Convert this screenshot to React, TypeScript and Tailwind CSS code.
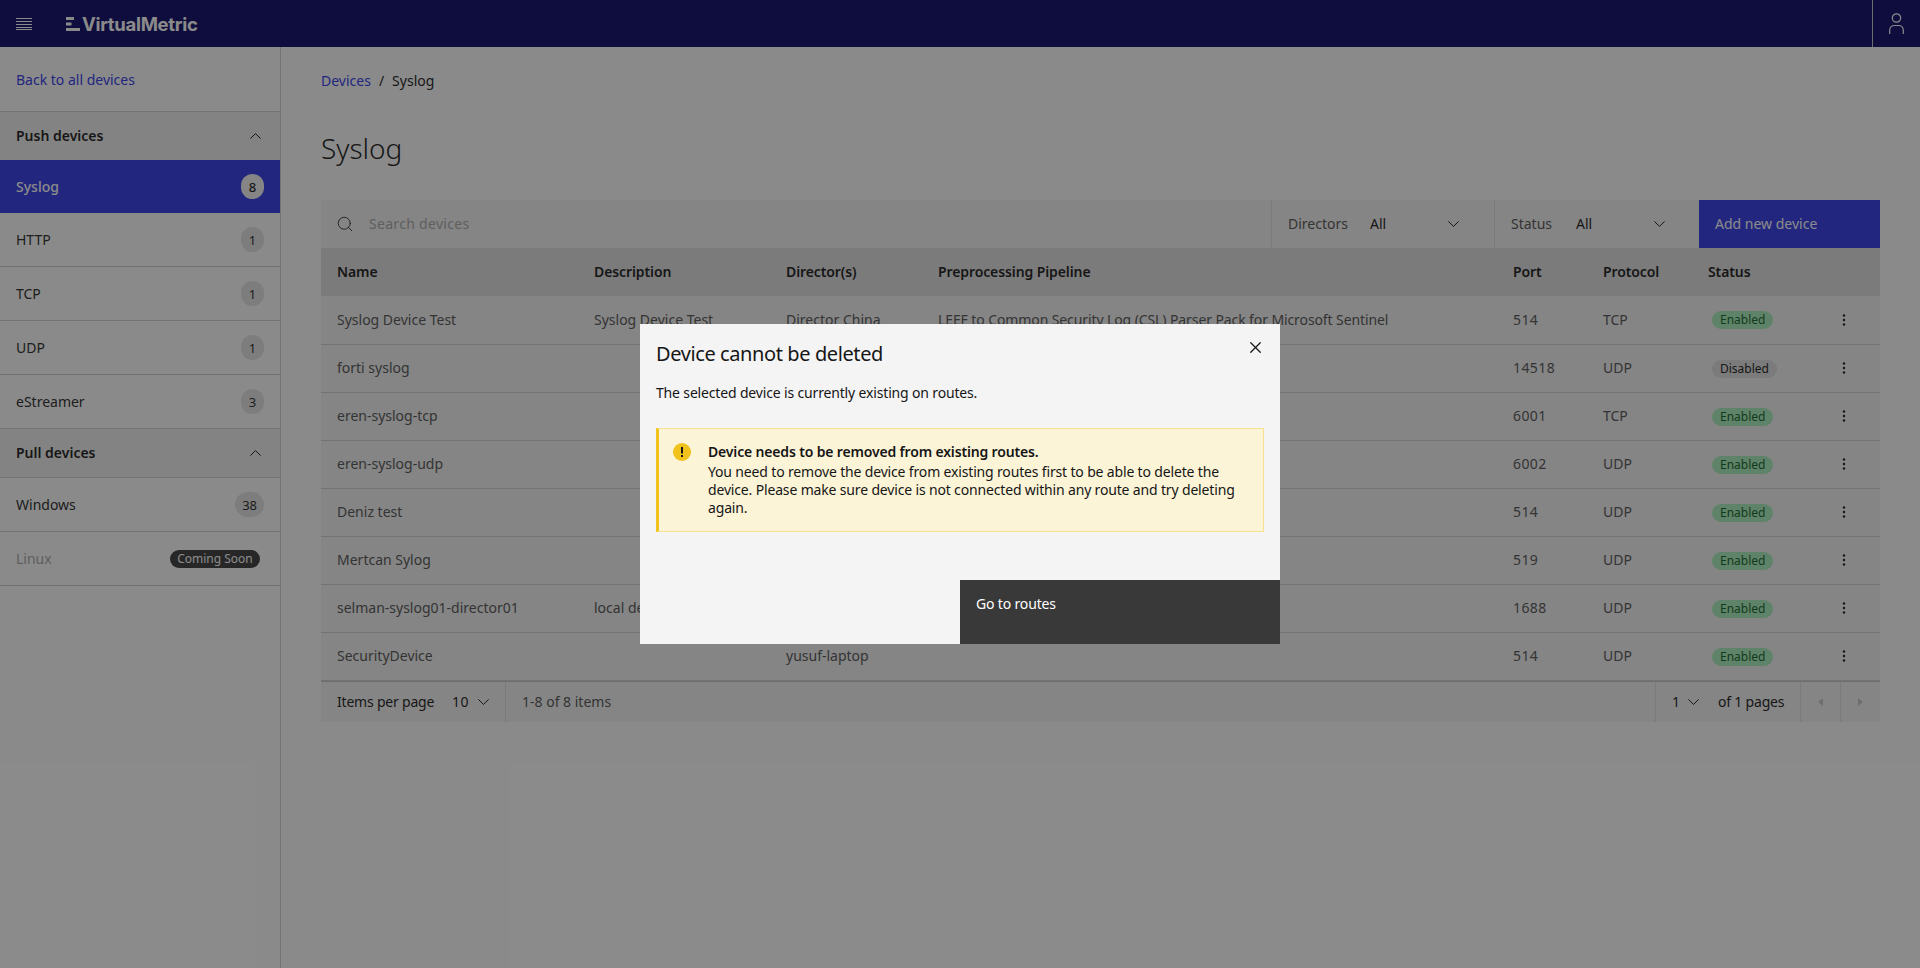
import { Search, X } from 'lucide-react';

type Device = {
  name: string;
  description?: string;
  director?: string;
  pipeline?: string;
  port: number;
  protocol: string;
  enabled: boolean;
};

const DEVICES: Device[] = [
  {
    name: 'Syslog Device Test',
    description: 'Syslog Device Test',
    director: 'Director China',
    pipeline: 'LEEF to Common Security Log (CSL) Parser Pack for Microsoft Sentinel',
    port: 514,
    protocol: 'TCP',
    enabled: true,
  },
  { name: 'forti syslog', port: 14518, protocol: 'UDP', enabled: false },
  { name: 'eren-syslog-tcp', port: 6001, protocol: 'TCP', enabled: true },
  { name: 'eren-syslog-udp', port: 6002, protocol: 'UDP', enabled: true },
  { name: 'Deniz test', port: 514, protocol: 'UDP', enabled: true },
  { name: 'Mertcan Sylog', port: 519, protocol: 'UDP', enabled: true },
  { name: 'selman-syslog01-director01', description: 'local device', port: 1688, protocol: 'UDP', enabled: true },
  { name: 'SecurityDevice', director: 'yusuf-laptop', port: 514, protocol: 'UDP', enabled: true },
];

const PUSH_ITEMS = [
  { label: 'Syslog', count: 8, active: true },
  { label: 'HTTP', count: 1 },
  { label: 'TCP', count: 1 },
  { label: 'UDP', count: 1 },
  { label: 'eStreamer', count: 3 },
];

function Chevron({ up }: { up?: boolean }) {
  return (
    <svg width="11" height="6" viewBox="0 0 11 6" fill="none" stroke="#161616" strokeWidth="1" className="shrink-0">
      <path d={up ? 'M.4 5.6l5.1-5 5.1 5' : 'M.4.4l5.1 5 5.1-5'} />
    </svg>
  );
}

function MenuIcon() {
  return (
    <svg width="16" height="12" viewBox="0 0 16 12" fill="none" stroke="#fff" strokeWidth="1">
      <path d="M0 .5h16M0 3.5h16M0 6.5h16M0 9.5h16M0 11.5h16" />
    </svg>
  );
}

function Logo() {
  return (
    <div className="flex items-center gap-[2px]">
      <svg width="14" height="14" viewBox="0 0 14 14" fill="#fff">
        <rect x="0" y="0" width="8" height="3" />
        <rect x="0" y="5.5" width="5.5" height="3" />
        <rect x="0" y="11" width="14" height="3" />
      </svg>
      <span className="text-[18.5px] leading-5 font-bold tracking-[-0.3px] text-white font-['Inter',sans-serif]">
        VirtualMetric
      </span>
    </div>
  );
}

function UserIcon() {
  return (
    <svg width="15" height="21" viewBox="0 0 15 21" fill="none" stroke="#fff" strokeWidth="1.2">
      <circle cx="7.5" cy="5" r="4.2" />
      <path d="M.7 21v-3.5c0-3 2-5 5-5h3.6c3 0 5 2 5 5V21" />
    </svg>
  );
}

function Kebab() {
  return (
    <svg width="4" height="12" viewBox="0 0 4 12" fill="#161616">
      <circle cx="2" cy="1.5" r="1.2" />
      <circle cx="2" cy="6" r="1.2" />
      <circle cx="2" cy="10.5" r="1.2" />
    </svg>
  );
}

function SideRow({ label, count, active }: { label: string; count: number; active?: boolean }) {
  return (
    <div
      className={
        active
          ? 'h-[53px] flex items-center justify-between pl-4 pr-4 bg-[#2e36e8] text-white font-medium'
          : 'h-[54px] flex items-center justify-between pl-4 pr-4 border-b border-[#d1d1d1] text-[#262626]'
      }
    >
      <span>{label}</span>
      <span
        className={
          active
            ? 'min-w-[23px] h-[25px] px-[7px] rounded-full flex items-center justify-center text-[13px] bg-[#f4f4f4] text-[#161616]'
            : 'min-w-[23px] h-[25px] px-[7px] rounded-full flex items-center justify-center text-[13px] bg-[#e4e4e4] text-[#262626]'
        }
      >
        {count}
      </span>
    </div>
  );
}

function SideHeader({ label, tall }: { label: string; tall?: boolean }) {
  return (
    <div
      className={
        tall
          ? 'h-[49px] flex items-center justify-between pl-4 pr-[19px] bg-[#f1f1f1] border-b border-[#d1d1d1] font-semibold text-[#161616]'
          : 'h-[48px] flex items-center justify-between pl-4 pr-[19px] bg-[#f1f1f1] font-semibold text-[#161616]'
      }
    >
      <span>{label}</span>
      <Chevron up />
    </div>
  );
}

function Sidebar() {
  return (
    <aside className="w-[281px] shrink-0 border-r border-[#d1d1d1] text-sm leading-[18px]">
      <div className="h-[65px] flex items-center pl-4 pt-[1px] border-b border-[#d1d1d1] text-[#2e36e8]">
        Back to all devices
      </div>
      <SideHeader label="Push devices" />
      {PUSH_ITEMS.map((item) => (
        <SideRow key={item.label} {...item} />
      ))}
      <SideHeader label="Pull devices" tall />
      <SideRow label="Windows" count={38} />
      <div className="h-[54px] flex items-center justify-between pl-4 pr-[20px] border-b border-[#d1d1d1]">
        <span className="text-[#a8a8a8]">Linux</span>
        <span className="h-[18px] w-[90px] rounded-full bg-[#393939] text-white text-xs leading-[18px] text-center">
          Coming Soon
        </span>
      </div>
    </aside>
  );
}

function Toolbar() {
  return (
    <div className="h-12 flex items-stretch bg-[#f4f4f4]">
      <div className="flex-1 flex items-center pl-[15px] gap-[15px] text-[#a8a8a8]">
        <Search size={18} strokeWidth={1.1} className="text-[#161616]" />
        <span className="tracking-[0.3px]">Search devices</span>
      </div>
      <div className="w-[223px] flex items-center pl-4 border-l border-[#e0e0e0]">
        <span className="w-[82px] text-[#525252]">Directors</span>
        <span className="w-[78px] text-[#161616]">All</span>
        <Chevron />
      </div>
      <div className="w-[205px] flex items-center pl-4 border-l border-[#e0e0e0]">
        <span className="w-[65px] text-[#525252]">Status</span>
        <span className="w-[78px] text-[#161616]">All</span>
        <Chevron />
      </div>
      <div className="w-[181px] flex items-center pl-4 bg-[#2e36e8] text-white">Add new device</div>
    </div>
  );
}

function DeviceTable() {
  return (
    <table className="w-full table-fixed border-collapse">
      <thead>
        <tr className="h-12 bg-[#e0e0e0] text-left text-[#161616] tracking-[-0.1px]">
          <th className="w-[257px] pl-4 font-semibold">Name</th>
          <th className="w-[192px] pl-4 font-semibold">Description</th>
          <th className="w-[152px] pl-4 font-semibold">Director(s)</th>
          <th className="w-[575px] pl-4 font-semibold">Preprocessing Pipeline</th>
          <th className="w-[90px] pl-4 font-semibold">Port</th>
          <th className="w-[105px] pl-4 font-semibold">Protocol</th>
          <th className="w-[124px] pl-4 font-semibold">Status</th>
          <th />
        </tr>
      </thead>
      <tbody>
        {DEVICES.map((d) => (
          <tr key={d.name} className="h-12 bg-[#f4f4f4] border-b border-[#d1d1d1] text-[#525252]">
            <td className="pl-4 whitespace-nowrap">{d.name}</td>
            <td className="pl-4 whitespace-nowrap">{d.description}</td>
            <td className="pl-4 whitespace-nowrap">{d.director}</td>
            <td className="pl-4 whitespace-nowrap tracking-[-0.1px]">{d.pipeline}</td>
            <td className="pl-4 tracking-[0.4px]">{d.port}</td>
            <td className="pl-4">{d.protocol}</td>
            <td className="pl-5">
              {d.enabled ? (
                <span className="inline-block h-[18px] px-2 rounded-full bg-[#a7f0ba] text-[#0e6027] text-xs leading-[18px]">
                  Enabled
                </span>
              ) : (
                <span className="inline-block h-[18px] px-2 rounded-full bg-[#e0e0e0] text-[#161616] text-xs leading-[18px]">
                  Disabled
                </span>
              )}
            </td>
            <td className="pl-[26px]">
              <Kebab />
            </td>
          </tr>
        ))}
      </tbody>
    </table>
  );
}

function Pagination() {
  return (
    <div className="h-[41px] flex items-stretch bg-[#f4f4f4] border-t border-[#c6c6c6] text-[#161616]">
      <div className="w-[185px] flex items-center pl-4 border-r border-[#e0e0e0]">
        <span className="w-[97px] whitespace-nowrap tracking-[-0.2px]">Items per page</span>
        <span className="ml-[18px] w-[26px] tracking-[0.5px]">10</span>
        <Chevron />
      </div>
      <div className="flex-1 flex items-center pl-4 text-[#525252]">1-8 of 8 items</div>
      <div className="w-[145px] flex items-center pl-4 border-l border-[#e0e0e0]">
        <span className="w-[16px]">1</span>
        <Chevron />
        <span className="ml-[19px] whitespace-nowrap tracking-[-0.2px]">of 1 pages</span>
      </div>
      <div className="w-10 flex items-center justify-center border-l border-[#e0e0e0]">
        <svg width="5" height="8" viewBox="0 0 5 8" fill="#c6c6c6">
          <path d="M5 0v8L0 4z" />
        </svg>
      </div>
      <div className="w-10 flex items-center justify-center border-l border-[#e0e0e0]">
        <svg width="5" height="8" viewBox="0 0 5 8" fill="#c6c6c6">
          <path d="M0 0v8l5-4z" />
        </svg>
      </div>
    </div>
  );
}

function DeleteModal() {
  return (
    <div className="absolute inset-0 z-10 flex items-center justify-center bg-[#161616]/50">
      <div className="relative w-[640px] h-[320px] flex flex-col bg-[#f4f4f4] text-sm leading-[18px] tracking-[-0.16px]">
        <h2 className="pt-4 pl-4 text-xl leading-7 tracking-[-0.4px] text-[#161616]">Device cannot be deleted</h2>
        <p className="mt-4 pl-4 text-[#161616]">The selected device is currently existing on routes.</p>
        <div className="mt-[26px] mx-4 h-[104px] flex gap-[17px] pl-[14px] pt-[14px] pr-4 bg-[#fcf4d6] border border-l-[3px] border-[#f8e08e] border-l-[#f1c21b] text-[#161616]">
          <svg width="18" height="18" viewBox="0 0 18 18" className="shrink-0">
            <circle cx="9" cy="9" r="9" fill="#f1c21b" />
            <rect x="8" y="4" width="2" height="6.5" fill="#161616" />
            <rect x="8" y="12" width="2" height="2" fill="#161616" />
          </svg>
          <div>
            <p className="font-semibold mb-[2px]">Device needs to be removed from existing routes.</p>
            <p>
              You need to remove the device from existing routes first to be able to delete the device. Please make sure
              device is not connected within any route and try deleting again.
            </p>
          </div>
        </div>
        <div className="mt-auto flex justify-end">
          <div className="w-80 h-16 pl-4 pt-[15px] bg-[#393939] text-white">Go to routes</div>
        </div>
        <X size={19} strokeWidth={1.6} className="absolute top-[14px] right-[15px] text-[#161616]" />
      </div>
    </div>
  );
}

export default function App() {
  return (
    <div className="relative h-screen flex flex-col overflow-hidden bg-white font-['Noto_Sans',sans-serif]">
      <header className="h-[47px] shrink-0 flex items-center bg-[#080464]">
        <div className="pl-4 flex">
          <MenuIcon />
        </div>
        <div className="ml-[34px]">
          <Logo />
        </div>
        <div className="ml-auto h-full w-12 flex items-center justify-end pr-4 border-l border-[#c6c6c6]">
          <UserIcon />
        </div>
      </header>
      <div className="flex-1 flex min-h-0">
        <Sidebar />
        <main className="flex-1 min-w-0 px-10 text-sm leading-[18px]">
          <div className="mt-[25px] flex gap-2">
            <span className="text-[#2e36e8]">Devices</span>
            <span className="text-[#161616]">/</span>
            <span className="text-[#161616]">Syslog</span>
          </div>
          <h1 className="mt-[40px] text-[28px] leading-9 font-light text-[#161616]">Syslog</h1>
          <div className="mt-[34px]">
            <Toolbar />
            <DeviceTable />
            <Pagination />
          </div>
        </main>
      </div>
      <DeleteModal />
    </div>
  );
}
